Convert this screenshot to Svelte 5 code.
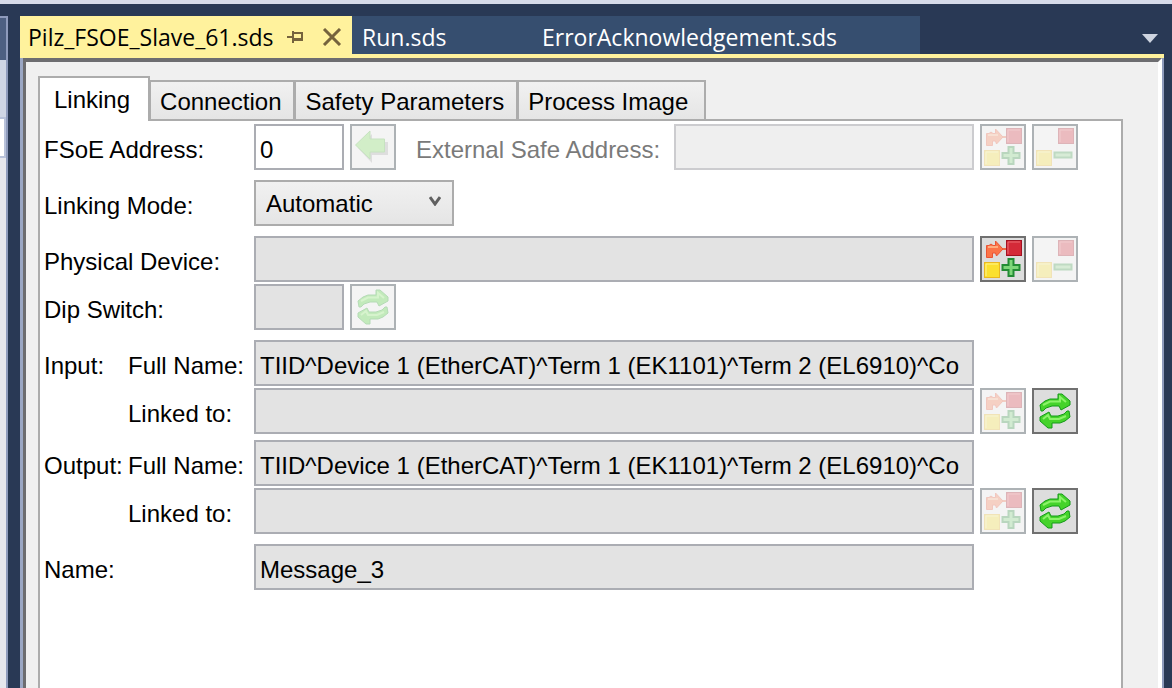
<script>
  const documents = [{ name: 'Run.sds' }, { name: 'ErrorAcknowledgement.sds' }];
  const pages = ['Linking', 'Connection', 'Safety Parameters', 'Process Image'];
  let page = $state('Linking');
  let mode = $state('Automatic');
  const fullName = 'TIID^Device 1 (EtherCAT)^Term 1 (EK1101)^Term 2 (EL6910)^Co';
</script>

<svelte:head><title>Pilz_FSOE_Slave_61.sds</title></svelte:head>

{#snippet linkIcon(add)}
  <svg class="icon" viewBox="2 2 42 42" aria-hidden="true">
    <rect x="26.5" y="4.5" width="15" height="15" fill="#d42a38" stroke="#a31222" />
    <path d="M28 18V6h12" fill="none" stroke="#ea6a70" />
    <rect x="4.5" y="26.5" width="15" height="15" fill="#fbe030" stroke="#eab820" />
    <path d="M6 40V28h12" fill="none" stroke="#fff48a" />
    {#if add}
      <path d="M21 13h5" stroke="#ee6a45" stroke-width="2" />
      <path d="M6.500 21.500V9.500H9L11 8L13 9.500H15.500V5L23 13L16.500 20L15.500 17H12.500V21.500Z" fill="#fb7448" stroke="#ea5434" />
      <path d="M8 11h10" stroke="#ffad80" stroke-width="2" />
      <path d="M28.500 23h5v6h6v5h-6v6h-5v-6h-6v-5h6z" fill="#7ed67a" stroke="#238b35" stroke-width="2" />
    {:else}
      <path d="M22.500 28.500h17v5h-17z" fill="#8ed68a" stroke="#3a9a48" stroke-width="2" />
    {/if}
  </svg>
{/snippet}

{#snippet refreshIcon()}
  <svg class="icon" viewBox="2 2 42 42" aria-hidden="true">
    <g fill="#45d32b" stroke="#159a18" stroke-width="1" stroke-linejoin="round">
      <path d="M9 23L8 17L13 13L18 11H26V6H30L38 13V17L29 22L27 18H20L14 20L11 23Z" />
      <path d="M37 23L38 29L33 33L28 35H20V40H16L8 33V29L17 24L19 28H26L32 26L35 23Z" />
    </g>
    <path d="M11 17L18 13.500H28V9L34 14" fill="none" stroke="#8cf36a" stroke-width="2" />
    <path d="M11 31L16 27L18 31H27L34 28" fill="none" stroke="#8cf36a" stroke-width="2" />
  </svg>
{/snippet}

{#snippet linkButton(label, add, disabled)}
  <button class="tool" aria-label={label} {disabled}>{@render linkIcon(add)}</button>
{/snippet}

<div class="shell">
  <aside class="neighbour"><div class="cap"></div><div class="bar"></div><div class="search"></div></aside>

  <main>
    <nav class="documents" aria-label="Open documents">
      <div class="document current">
        <a href="#slave">Pilz_FSOE_Slave_61.sds</a>
        <button class="glyph pin" aria-label="Pin tab">
          <svg viewBox="0 0 18 16" width="18" height="16"><path d="M1 8h6M7 2v12M7 4h9v7H7M7 10h9" fill="none" stroke="#75633d" stroke-width="2" /></svg>
        </button>
        <button class="glyph" aria-label="Close tab">
          <svg viewBox="0 0 20 18" width="20" height="18"><path d="M2 1l16 16M18 1L2 17" fill="none" stroke="#75633d" stroke-width="3" /></svg>
        </button>
      </div>
      {#each documents as doc}
        <div class="document"><a href="#{doc.name}">{doc.name}</a></div>
      {/each}
      <button class="glyph more" aria-label="Window list">
        <svg viewBox="0 0 16 9" width="16" height="9"><path d="M0 0h16L8 9z" fill="#ced4e0" /></svg>
      </button>
    </nav>

    <div class="frame">
      <div class="editor">
        <div class="pages" role="tablist">
          {#each pages as name}
            <button type="button" role="tab" class="page" aria-selected={page === name} onclick={() => (page = name)}>{name}</button>
          {/each}
        </div>

        <form class="panel" onsubmit={(e) => e.preventDefault()}>
          <div class="row">
            <label class="caption" for="address">FSoE Address:</label>
            <input id="address" class="short" value="0" />
            <button class="tool" aria-label="Take over address" disabled>
              <svg class="icon" viewBox="2 2 42 42" aria-hidden="true">
                <path d="M8 24L22 10V18H38V31H22V39Z" fill="#777" opacity="0.6" />
                <path d="M5.500 21L20 7V15H34.500V28H20V35Z" fill="#7de05a" stroke="#52b63c" />
              </svg>
            </button>
            <label class="external" for="external">External Safe Address:</label>
            <input id="external" class="wide" disabled />
            {@render linkButton('Link external address', true, true)}
            {@render linkButton('Unlink external address', false, true)}
          </div>
          <div class="row apart">
            <label class="caption" for="mode">Linking Mode:</label>
            <div class="choice">
              <select id="mode" bind:value={mode}><option>Automatic</option><option>Manual</option></select>
              <svg viewBox="0 0 12 10" width="12" height="10" aria-hidden="true"><path d="M1 1l5 7l5-7" fill="none" stroke="#606060" stroke-width="3" /></svg>
            </div>
          </div>
          <div class="row apart">
            <label class="caption" for="device">Physical Device:</label>
            <input id="device" class="wide" readonly />
            {@render linkButton('Link device', true, false)}
            {@render linkButton('Unlink device', false, true)}
          </div>
          <div class="row">
            <label class="caption" for="dip">Dip Switch:</label>
            <input id="dip" class="short" readonly />
            <button class="tool" aria-label="Refresh dip switch" disabled>{@render refreshIcon()}</button>
          </div>
          {#each ['Input', 'Output'] as kind, i}
            <div class="row" class:apart={i === 0} class:near={i === 1}>
              <span class="kind">{kind}:</span>
              <label class="sub" for="{kind}-name">Full Name:</label>
              <input id="{kind}-name" class="wide" value={fullName} readonly />
              <span class="space"></span>
            </div>
            <div class="row">
              <span class="kind"></span>
              <label class="sub" for="{kind}-link">Linked to:</label>
              <input id="{kind}-link" class="wide" readonly />
              {@render linkButton(`Link ${kind}`, true, true)}
              <button class="tool" aria-label="Refresh {kind}">{@render refreshIcon()}</button>
            </div>
          {/each}
          <div class="row apart">
            <label class="caption" for="name">Name:</label>
            <input id="name" class="wide" value="Message_3" readonly />
            <span class="space"></span>
          </div>
        </form>
      </div>
    </div>
  </main>
</div>

<style>
  :global(body) { margin: 0; background: #293955; }
  * { box-sizing: border-box; }
  button, input, select { font: inherit; color: inherit; margin: 0; border-radius: 0; }
  .shell {
    display: flex;
    min-height: 100vh;
    padding-right: 8px;
    border-top: 4px solid #d6dbe9;
    background: #293955;
    color: #000;
    font: 24px/28px "Liberation Sans", Arial, sans-serif;
  }
  .neighbour { width: 8px; margin-top: 12px; background: #e6e7ed; border-right: 2px solid #8e9bbc; }
  .cap { height: 44px; background: #4d6082; border-top: 2px solid #8e9bbc; }
  .bar { height: 57px; background: #cfd6e5; }
  .search { height: 41px; background: #fff; border: solid #b8c2da; border-width: 2px 2px 2px 0; }
  main { flex: 1; min-width: 0; margin-left: 12px; padding-top: 12px; display: flex; flex-direction: column; }

  .documents {
    display: flex;
    height: 42px;
    border-bottom: 4px solid #fff29d;
    font: 23px/38px "Open Sans", "Noto Sans", sans-serif;
  }
  .document { display: flex; height: 38px; padding: 4px 10px 0; align-items: center; background: #364e6f; color: #fff; }
  .document:nth-child(2) { width: 180px; }
  .document:nth-child(3) { width: 388px; }
  .document a { color: inherit; text-decoration: none; white-space: nowrap; }
  .document.current { width: 332px; height: 42px; padding: 0 10px 0 8px; background: #fff29d; color: #000; }
  .glyph { display: flex; padding: 0; border: 0; background: none; }
  .pin { margin: 0 18px 0 auto; }
  .more { margin: 18px 6px 0 auto; align-self: flex-start; }

  .frame { flex: 1; display: flex; border-left: 3px solid #9ba7c4; border-right: 2px solid #8e9bbc; }
  .editor {
    flex: 1;
    min-width: 0;
    display: flex;
    flex-direction: column;
    padding: 14px 35px 0 12px;
    background: #f0f0f0;
    border-top: 4px solid #6d6d70;
    border-left: 3px solid #6d6d70;
    border-right: 4px solid #fff;
  }
  .pages { display: flex; align-items: flex-end; height: 43px; }
  .page {
    height: 39px;
    margin-right: -1px;
    padding: 2px 12px 0 9px;
    border: 2px solid #acacac;
    border-bottom: 0;
    background: linear-gradient(#f1f1f1, #e5e5e5);
    white-space: nowrap;
  }
  .page:last-child { padding-right: 16px; }
  .page[aria-selected='true'] { height: 45px; margin-bottom: -2px; padding: 0 18px 0 14px; background: #fff; position: relative; z-index: 1; }
  .panel { flex: 1; padding: 3px 43px 20px 4px; background: #fff; border: solid #acacac; border-width: 2px 2px 0; }

  .row { display: flex; height: 46px; margin-bottom: 2px; align-items: center; }
  .apart { margin-top: 10px; }
  .near { margin-top: 6px; }
  .caption { width: 210px; padding-top: 6px; }
  .kind { width: 84px; padding-top: 6px; white-space: nowrap; }
  .sub { width: 126px; padding-top: 6px; white-space: nowrap; }
  .external { margin-left: 20px; width: 258px; padding-top: 6px; color: #7a7a7a; white-space: nowrap; }
  input { height: 46px; min-width: 0; padding: 6px 0 0 4px; border: 2px solid #abadb3; background: #fff; outline-offset: -2px; }
  input:read-only { background: #e3e3e3; }
  input:disabled { background: #efefef; border-color: #cccccf; }
  .short { width: 90px; }
  .wide { flex: 1; }
  .choice { display: grid; width: 200px; }
  .choice > * { grid-area: 1 / 1; }
  .choice svg { justify-self: end; align-self: center; margin: 0 13px 4px 0; pointer-events: none; }
  select { appearance: none; height: 46px; padding: 2px 28px 0 10px; border: 2px solid #acacac; background: linear-gradient(#f1f1f1, #e5e5e5); }
  .tool { display: flex; flex: none; width: 46px; height: 46px; margin-left: 6px; padding: 0; border: 2px solid #707070; background: #ddd; }
  .tool:disabled { background: #f4f4f4; border-color: #adb2b5; }
  .tool:disabled .icon { opacity: 0.28; }
  .icon { width: 42px; height: 42px; }
  .space { flex: none; width: 104px; }
</style>
